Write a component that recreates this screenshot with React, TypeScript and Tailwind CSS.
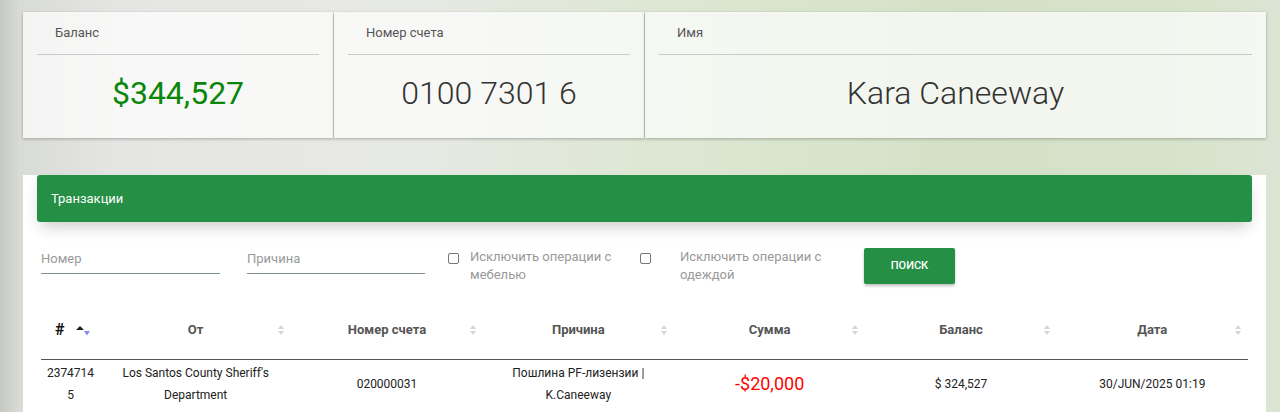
import React from 'react';

// Account overview: summary cards + transactions table
type Summary = { label: string; value: string; tone: 'money' | 'plain' };

const summary: Summary[] = [
  { label: 'Баланс', value: '$344,527', tone: 'money' },
  { label: 'Номер счета', value: '0100 7301 6', tone: 'plain' },
  { label: 'Имя', value: 'Kara Caneeway', tone: 'plain' },
];

const columns = ['От', 'Номер счета', 'Причина', 'Сумма', 'Баланс', 'Дата'];

function SortBoth() {
  return (
    <svg width="6" height="10" viewBox="0 0 6 10" className="absolute right-[7px] top-1/2 -translate-y-1/2">
      <path d="M3 0 L6 4 L0 4 Z" fill="#d6d6d6" />
      <path d="M0 6 L6 6 L3 10 Z" fill="#d6d6d6" />
    </svg>
  );
}

function SortAsc() {
  return (
    <svg width="16" height="10" viewBox="0 0 16 10">
      <path d="M5 0 L9 4 L1 4 Z" fill="#1f1f1f" />
      <path d="M9 5 L15 5 L12 9.5 Z" fill="#8a8af2" />
    </svg>
  );
}

function SummaryCard({ item, width }: { item: Summary; width: string }) {
  return (
    <div className={`${width} h-[126px] shrink-0 bg-white/70 px-[14px] pt-[13px] shadow-[0_1px_3px_rgba(0,0,0,0.28)]`}>
      <div className="pl-[18px] text-[13px] leading-[16px] text-[#555]">{item.label}</div>
      <div className="mt-[13px] border-t border-[#cacaca]" />
      <div
        className={`mt-[18px] text-center text-[32px] leading-[40px] ${
          item.tone === 'money' ? 'font-normal text-[#0a860a]' : 'font-light text-[#333]'
        }`}
      >
        {item.value}
      </div>
    </div>
  );
}

function Check({ label, gap }: { label: string; gap: string }) {
  return (
    <div className="flex items-start">
      <span className="mt-[5px] h-[11px] w-[11px] rounded-[2px] border border-[#777] bg-white" />
      <span className={`${gap} w-[150px] text-[13px] leading-[18px] text-[#999]`}>{label}</span>
    </div>
  );
}

export default function App() {
  return (
    <div className="h-[412px] w-[1280px] overflow-hidden font-['Roboto',sans-serif] bg-[linear-gradient(90deg,#c6c8c3_0px,#d9dbd7_20px,#e5e6e3_120px,#e7e9e4_420px,#dee7d4_640px,#d4e1c6_960px,#d6e2ca_1160px,#dce5d4_1280px)]">
      <div className="pl-[23px] pt-[12px]">
        <div className="flex gap-px">
          <SummaryCard item={summary[0]} width="w-[310px]" />
          <SummaryCard item={summary[1]} width="w-[310px]" />
          <SummaryCard item={summary[2]} width="w-[621px]" />
        </div>

        <div className="mt-[54px] h-[240px] w-[1243px] bg-white">
          <div className="mx-[14px] -mt-[17px] flex h-[47px] items-center rounded-[3px] bg-[#248f45] pl-[14px] text-[13px] text-white shadow-[0_8px_16px_-4px_rgba(0,0,0,0.22)]">
            Транзакции
          </div>

          <div className="mt-[26px] flex items-start pl-[18px]">
            <div className="h-[26px] w-[179px] border-b border-[#7c9288] pt-[3px] text-[13px] leading-[16px] text-[#999]">
              Номер
            </div>
            <div className="ml-[27px] h-[26px] w-[178px] border-b border-[#7c9288] pt-[3px] text-[13px] leading-[16px] text-[#999]">
              Причина
            </div>
            <div className="ml-[23px] w-[192px]">
              <Check label="Исключить операции с мебелью" gap="ml-[11px]" />
            </div>
            <div className="w-[224px]">
              <Check label="Исключить операции с одеждой" gap="ml-[29px]" />
            </div>
            <button className="h-[36px] w-[91px] rounded-[2px] bg-[#248f45] text-[11px] font-medium text-white shadow-[0_2px_3px_rgba(0,0,0,0.25)]">
              ПОИСК
            </button>
          </div>

          <div className="mx-[18px] mt-[16px]">
            <div className="grid h-[60px] grid-cols-[59px_repeat(6,1fr)] border-b border-[#555] text-[13px] font-bold text-[#555]">
              <div className="flex items-center pl-[14px]">
                <span className="text-[16px] text-[#111]">#</span>
                <span className="ml-[11px] mt-[2px]">
                  <SortAsc />
                </span>
              </div>
              {columns.map((c) => (
                <div key={c} className="relative flex items-center justify-center">
                  {c}
                  <SortBoth />
                </div>
              ))}
            </div>

            <div className="grid grid-cols-[59px_repeat(6,1fr)] pt-[2px] text-[12px] leading-[22px] text-[#222]">
              <div className="break-all px-[4px] text-center">23747145</div>
              <div className="px-[18px] text-center">Los Santos County Sheriff's Department</div>
              <div className="flex items-center justify-center">020000031</div>
              <div className="px-[18px] text-center">Пошлина PF-лизензии | K.Caneeway</div>
              <div className="flex items-center justify-center text-[18px] text-[#ff0000]">-$20,000</div>
              <div className="flex items-center justify-center">$ 324,527</div>
              <div className="flex items-center justify-center">30/JUN/2025 01:19</div>
            </div>
          </div>
        </div>
      </div>
    </div>
  );
}
